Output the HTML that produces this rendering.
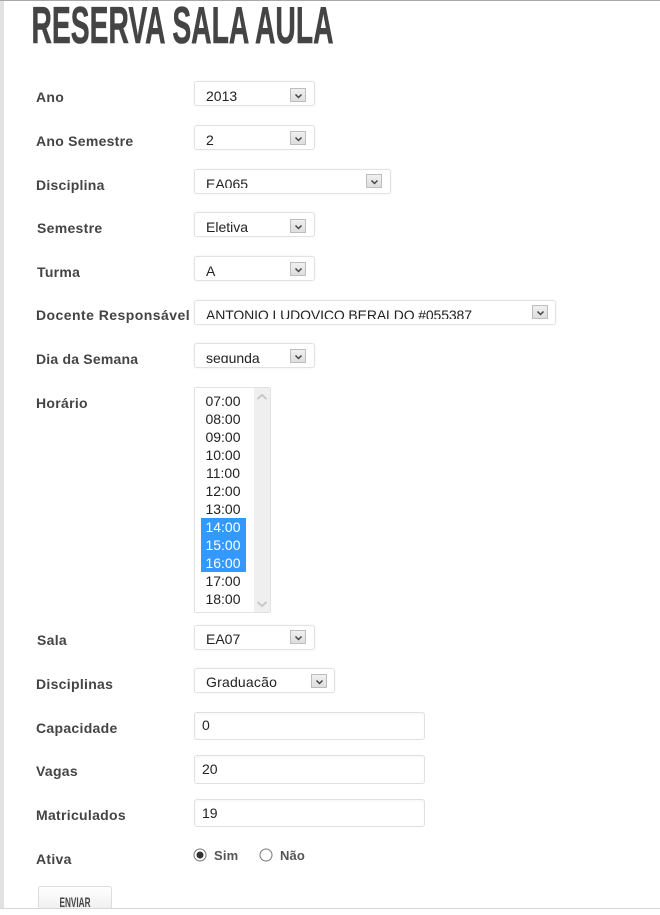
<!DOCTYPE html>
<html lang="pt">
<head>
<meta charset="utf-8">
<title>Reserva Sala Aula</title>
<style>
html,body{margin:0;padding:0;background:#fff}
body{width:660px;height:915px;position:relative;overflow:hidden;font-family:"Liberation Sans",Arial,sans-serif;color:#222}
.abs{position:absolute}
.lab{position:absolute;font-weight:bold;font-size:14px;line-height:16px;color:#444;letter-spacing:.3px;white-space:nowrap}
.sel{position:absolute;box-sizing:border-box;height:25px;border:1px solid #e2e2e2;border-radius:3px;background:#fff;box-shadow:0 0 2px rgba(0,0,0,.06)}
.sel .t{position:absolute;left:11px;top:0;right:0;bottom:3px;overflow:hidden;font-size:14px;line-height:16px;color:#222;white-space:nowrap}
.sel .t span{position:absolute;left:0}
.arr{position:absolute;width:14px;height:12px;border:1px solid #bdbdbd;background:linear-gradient(#f0f0f0,#dedede)}
.arr svg{position:absolute;left:3px;top:3px}
.inp{position:absolute;box-sizing:border-box;left:194px;width:231px;height:28px;border:1px solid #e0e0e0;border-radius:3px;background:#fff;box-shadow:inset 0 1px 2px rgba(0,0,0,.04);font-size:14px;line-height:24px;padding-left:7px;color:#222}
.opt{position:absolute;left:6px;width:45px;height:18px;font-size:14px;line-height:18px;text-align:center;color:#222;text-indent:-1px}
.opt.on{background:#3399ff;color:#fff}
</style>
</head>
<body>
<div class="abs" style="left:0;top:0;width:660px;height:1px;background:#a8a8a8"></div>
<div class="abs" style="left:0;top:1px;width:4px;height:907px;background:#e2e2e2"></div>

<svg class="abs" style="left:30px;top:0" width="310" height="50">
  <text x="1.5" y="43" font-family="Liberation Sans, Arial, sans-serif" font-weight="bold" font-size="52" fill="#444" stroke="#444" stroke-width=".6" textLength="302" lengthAdjust="spacingAndGlyphs">RESERVA SALA AULA</text>
</svg>

<div class="lab" style="left:36px;top:89px">Ano</div>
<div class="lab" style="left:36px;top:133px;letter-spacing:.27px">Ano Semestre</div>
<div class="lab" style="left:36px;top:177px;letter-spacing:.25px">Disciplina</div>
<div class="lab" style="left:37px;top:220px">Semestre</div>
<div class="lab" style="left:37px;top:264px">Turma</div>
<div class="lab" style="left:36px;top:307px;letter-spacing:.45px">Docente Responsável</div>
<div class="lab" style="left:36px;top:351px;letter-spacing:.2px">Dia da Semana</div>
<div class="lab" style="left:36px;top:395px">Horário</div>
<div class="lab" style="left:37px;top:632px">Sala</div>
<div class="lab" style="left:36px;top:676px">Disciplinas</div>
<div class="lab" style="left:36px;top:720px">Capacidade</div>
<div class="lab" style="left:36px;top:763px">Vagas</div>
<div class="lab" style="left:36px;top:807px">Matriculados</div>
<div class="lab" style="left:36px;top:851px">Ativa</div>

<div class="sel" style="left:194px;top:81px;width:121px"><div class="t"><span style="top:6px">2013</span></div><div class="arr" style="left:95px;top:6px"><svg width="9" height="8"><path d="M1.5 2.5L4.5 5.5L7.5 2.5" fill="none" stroke="#444" stroke-width="1.5"/></svg></div></div>
<div class="sel" style="left:194px;top:125px;width:121px"><div class="t"><span style="top:6px">2</span></div><div class="arr" style="left:95px;top:5px"><svg width="9" height="8"><path d="M1.5 2.5L4.5 5.5L7.5 2.5" fill="none" stroke="#444" stroke-width="1.5"/></svg></div></div>
<div class="sel" style="left:194px;top:169px;width:197px"><div class="t" style="bottom:5px"><span style="top:6px">EA065</span></div><div class="arr" style="left:171px;top:4px"><svg width="9" height="8"><path d="M1.5 2.5L4.5 5.5L7.5 2.5" fill="none" stroke="#444" stroke-width="1.5"/></svg></div></div>
<div class="sel" style="left:194px;top:212px;width:121px"><div class="t"><span style="top:6px">Eletiva</span></div><div class="arr" style="left:95px;top:6px"><svg width="9" height="8"><path d="M1.5 2.5L4.5 5.5L7.5 2.5" fill="none" stroke="#444" stroke-width="1.5"/></svg></div></div>
<div class="sel" style="left:194px;top:256px;width:121px"><div class="t"><span style="top:6px">A</span></div><div class="arr" style="left:95px;top:5px"><svg width="9" height="8"><path d="M1.5 2.5L4.5 5.5L7.5 2.5" fill="none" stroke="#444" stroke-width="1.5"/></svg></div></div>
<div class="sel" style="left:194px;top:300px;width:362px"><div class="t" style="bottom:5px"><span style="top:6px;letter-spacing:-.12px">ANTONIO LUDOVICO BERALDO #055387</span></div><div class="arr" style="left:337px;top:4px"><svg width="9" height="8"><path d="M1.5 2.5L4.5 5.5L7.5 2.5" fill="none" stroke="#444" stroke-width="1.5"/></svg></div></div>
<div class="sel" style="left:194px;top:343px;width:121px"><div class="t" style="bottom:4px"><span style="top:6px">segunda</span></div><div class="arr" style="left:95px;top:5px"><svg width="9" height="8"><path d="M1.5 2.5L4.5 5.5L7.5 2.5" fill="none" stroke="#444" stroke-width="1.5"/></svg></div></div>

<div class="abs" style="left:194px;top:387px;width:77px;height:226px;box-sizing:border-box;border:1px solid #e2e2e2;border-radius:2px;background:#fff">
  <div class="abs" style="left:59px;top:0;width:16px;height:224px;background:#efefef"></div>
  <svg class="abs" style="left:61px;top:5px" width="12" height="8"><path d="M1.5 6L6 2L10.5 6" fill="none" stroke="#c8c8c8" stroke-width="2"/></svg>
  <svg class="abs" style="left:61px;top:212px" width="12" height="8"><path d="M1.5 2L6 6L10.5 2" fill="none" stroke="#c8c8c8" stroke-width="2"/></svg>
  <div class="opt" style="top:4px">07:00</div>
  <div class="opt" style="top:22px">08:00</div>
  <div class="opt" style="top:40px">09:00</div>
  <div class="opt" style="top:58px">10:00</div>
  <div class="opt" style="top:76px">11:00</div>
  <div class="opt" style="top:94px">12:00</div>
  <div class="opt" style="top:112px">13:00</div>
  <div class="opt on" style="top:130px">14:00</div>
  <div class="opt on" style="top:148px">15:00</div>
  <div class="opt on" style="top:166px">16:00</div>
  <div class="opt" style="top:184px">17:00</div>
  <div class="opt" style="top:202px">18:00</div>
</div>

<div class="sel" style="left:194px;top:625px;width:121px"><div class="t"><span style="top:5px">EA07</span></div><div class="arr" style="left:95px;top:4px"><svg width="9" height="8"><path d="M1.5 2.5L4.5 5.5L7.5 2.5" fill="none" stroke="#444" stroke-width="1.5"/></svg></div></div>
<div class="sel" style="left:194px;top:668px;width:141px"><div class="t"><span style="top:5px;letter-spacing:.2px">Graduacão</span></div><div class="arr" style="left:116px;top:5px"><svg width="9" height="8"><path d="M1.5 2.5L4.5 5.5L7.5 2.5" fill="none" stroke="#444" stroke-width="1.5"/></svg></div></div>

<div class="inp" style="top:712px">0</div>
<div class="inp" style="top:755px;height:29px;line-height:26px">20</div>
<div class="inp" style="top:799px;line-height:26px">19</div>

<svg class="abs" style="left:193px;top:848px" width="14" height="14"><circle cx="7" cy="7" r="6" fill="#fff" stroke="#777"/><circle cx="7" cy="7" r="3.5" fill="#333"/></svg>
<div class="lab" style="left:214px;top:848px;font-size:13px;color:#555;letter-spacing:.2px">Sim</div>
<svg class="abs" style="left:259px;top:848px" width="14" height="14"><circle cx="7" cy="7" r="6" fill="#fff" stroke="#777"/></svg>
<div class="lab" style="left:280px;top:848px;font-size:13px;color:#555;letter-spacing:.1px">Não</div>

<div class="abs" style="left:38px;top:886px;width:74px;height:22px;box-sizing:border-box;border:1px solid #ddd;border-bottom:none;border-radius:3px 3px 0 0;background:linear-gradient(#fff,#f0f0f0)"></div>
<svg class="abs" style="left:38px;top:892px" width="74" height="16"><text x="21.5" y="15" font-family="Liberation Sans, Arial, sans-serif" font-weight="bold" font-size="14" fill="#444" textLength="31" lengthAdjust="spacingAndGlyphs">ENVIAR</text></svg>

<div class="abs" style="left:0;top:908px;width:660px;height:7px;background:#fff;border-top:1px solid #d8d8d8;box-sizing:border-box"></div>
</body>
</html>
